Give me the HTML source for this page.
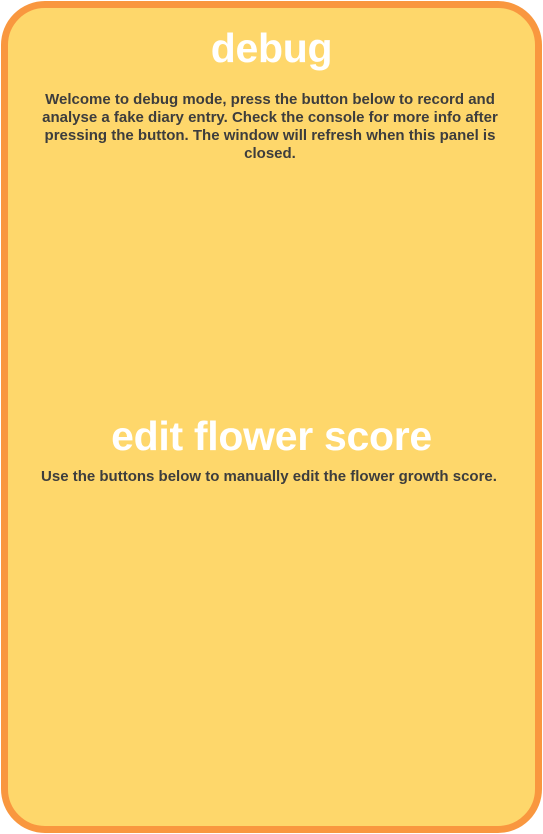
<!DOCTYPE html>
<html><head><meta charset="utf-8"><style>
html,body{margin:0;padding:0;background:#fff;width:543px;height:834px;overflow:hidden}
.box{position:absolute;left:1px;top:1px;width:527px;height:818px;border:7px solid #f9973f;border-radius:44px;background:#fed76b}
h1{position:absolute;left:0;width:100%;margin:0;text-align:center;color:#fff;font-family:"Liberation Sans",sans-serif;font-weight:bold;font-size:41px;letter-spacing:-0.3px}
p{position:absolute;margin:0;text-align:center;color:#3d3d3d;font-family:"Liberation Sans",sans-serif;font-weight:bold;font-size:15px;line-height:18px}
</style></head><body>
<div class="box"></div>
<h1 style="top:25px">debug</h1>
<p style="left:36px;width:468px;top:91px">Welcome to debug mode, press the button below to record and analyse a fake diary entry. Check the console for more info after pressing the button. The window will refresh when this panel is closed.</p>
<h1 style="top:413px">edit flower score</h1>
<p style="left:0;width:538px;top:468px">Use the buttons below to manually edit the flower growth score.</p>
</body></html>
